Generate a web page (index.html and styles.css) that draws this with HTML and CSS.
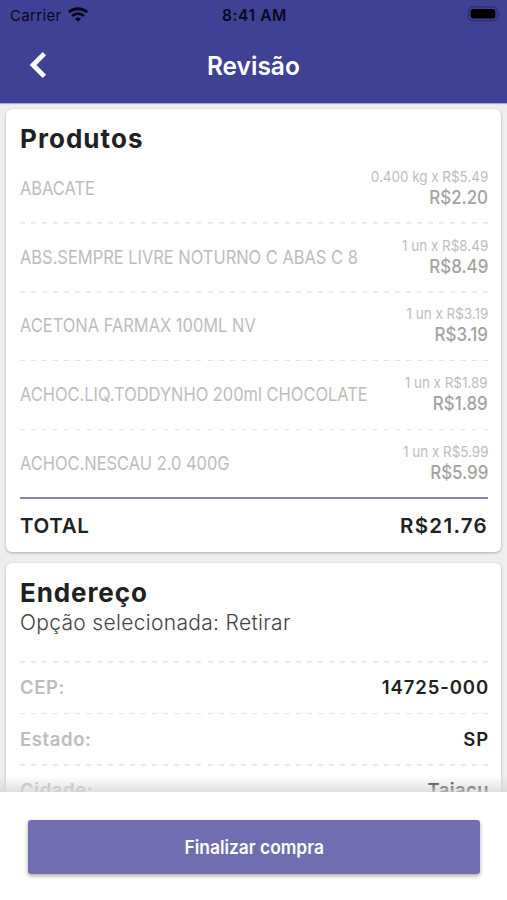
FILE: index.html
```
<!DOCTYPE html>
<html lang="pt-BR">
<head>
<meta charset="utf-8">
<title>Revisão</title>
<link rel="stylesheet" href="styles.css">
</head>
<body>
<div class="screen">
  <header class="header">
    <div class="status">
      <div class="carrier"><span>Carrier</span>
        <svg class="wifi" width="20" height="15" viewBox="0 0 20 15"><path d="M.8 5.2C6 .6 14 .6 19.2 5.2" fill="none" stroke="#08081c" stroke-width="3"/><path d="M4 9c3.5-3.1 8.5-3.1 12 0" fill="none" stroke="#08081c" stroke-width="2.7"/><path d="M6.9 11.6c1.8-1.5 4.4-1.5 6.2 0L10 14.7z" fill="#08081c"/></svg>
      </div>
      <div class="clock">8:41 AM</div>
      <svg class="battery" width="33" height="16" viewBox="0 0 33 16"><rect x=".7" y=".9" width="28.6" height="13.8" rx="4" fill="none" stroke="#2c2e70" stroke-width="1.2"/><rect x="2.7" y="3" width="24.6" height="9.6" rx="2.4" fill="#000"/><path d="M31 5.5c1.6.8 1.6 3.8 0 4.6z" fill="#2c2e70"/></svg>
    </div>
    <div class="nav">
      <svg class="back" width="18" height="28" viewBox="0 0 18 28"><path d="M15.4 2.6 4 14l11.4 11.4" fill="none" stroke="#fff" stroke-width="4.8"/></svg>
      <h1>Revisão</h1>
      <span></span>
    </div>
  </header>
  <main class="content">
    <section class="card products">
      <h2>Produtos</h2>
      <div class="item"><span class="name">ABACATE</span><div class="cost"><small>0.400 kg x R$5.49</small><b>R$2.20</b></div></div>
      <div class="item"><span class="name">ABS.SEMPRE LIVRE NOTURNO C ABAS C 8</span><div class="cost"><small>1 un x R$8.49</small><b>R$8.49</b></div></div>
      <div class="item"><span class="name">ACETONA FARMAX 100ML NV</span><div class="cost"><small>1 un x R$3.19</small><b>R$3.19</b></div></div>
      <div class="item"><span class="name">ACHOC.LIQ.TODDYNHO 200ml CHOCOLATE</span><div class="cost"><small>1 un x R$1.89</small><b>R$1.89</b></div></div>
      <div class="item last"><span class="name">ACHOC.NESCAU 2.0 400G</span><div class="cost"><small>1 un x R$5.99</small><b>R$5.99</b></div></div>
      <div class="total"><span>TOTAL</span><span class="sum">R$21.76</span></div>
    </section>
    <section class="card address">
      <h2>Endereço</h2>
      <p>Opção selecionada: Retirar</p>
      <div class="field"><span class="label">CEP:</span><span class="value">14725-000</span></div>
      <div class="field"><span class="label">Estado:</span><span class="value">SP</span></div>
      <div class="field"><span class="label">Cidade:</span><span class="value city">Taiaçu</span></div>
    </section>
  </main>
  <footer class="footer"><button><span>Finalizar compra</span></button></footer>
</div>
</body>
</html>
```
FILE: styles.css
```
* { box-sizing: border-box; }
body { margin: 0; font-family: Inter, "Liberation Sans", sans-serif; color: #212121; background: #eee; }
h1, h2, p { margin: 0; }
.screen { width: 507px; height: 900px; display: flex; flex-direction: column; overflow: hidden; }

.header { height: 103px; flex: none; background: #3f4294; box-shadow: 0 1px 1px #aaabcc; }
.status { height: 30px; display: grid; grid-template-columns: 1fr auto 1fr; align-items: center; padding: 0 8px 0 10px; color: #08081c; }
.carrier { display: flex; align-items: center; gap: 6px; font-size: 15px; letter-spacing: .35px; }
.wifi { margin-top: -1px; }
.clock { font-size: 15.5px; font-weight: 600; letter-spacing: .6px; }
.battery { justify-self: end; margin: -2px -2px 0 0; }
.nav { height: 70px; display: grid; grid-template-columns: 1fr auto 1fr; align-items: center; padding: 0 28px; }
h1 { color: #fff; font-size: 25.5px; line-height: 32px; font-weight: 600; transform: scaleX(.96); margin-top: 1px; }
.back { margin-left: 1px; }

.content { flex: 1; min-height: 0; overflow: hidden; padding: 6px 6px 0; }
.card { background: #fff; border-radius: 6px; padding: 0 13px 0 14px; margin: 0 0 11px; box-shadow: 0 1px 3px rgba(0, 0, 0, .28); }
.products { height: 442.6px; }
.address { height: 330px; }
h2 { font-size: 26px; line-height: 32px; font-weight: 700; letter-spacing: 1.05px; }
.products h2 { padding-top: 14px; height: 46px; }
.address h2 { padding-top: 14.4px; height: 45px; letter-spacing: .9px; }

.item, .field {
  display: flex; align-items: center; justify-content: space-between;
  background: repeating-linear-gradient(90deg, #e6e6e6 0 5px, transparent 5px 11.03px) 0 100% / 100% 1.6px no-repeat;
}
.item { height: 68.8px; padding-bottom: 1px; }
.item.last { background: none; border-bottom: 2.4px solid #8682bb; padding-bottom: 0; }
.name { font-size: 19px; line-height: 24px; color: #bdbdbd; white-space: nowrap; transform: scaleX(.865); transform-origin: 0 50%; }
.cost { width: 0; display: flex; flex-direction: column; align-items: flex-end; white-space: nowrap; margin-top: -3px; }
.cost small { font-size: 15px; line-height: 20px; color: #bdbdbd; transform: scaleX(.895); transform-origin: 100% 50%; }
.cost b { font-size: 19px; line-height: 21px; font-weight: 500; color: #a3a3a3; transform: scaleX(.89); transform-origin: 100% 50%; }
.total { height: 53px; display: flex; align-items: center; justify-content: space-between; font-size: 20.5px; font-weight: 600; letter-spacing: .65px; }
.sum { letter-spacing: 1.3px; }

.address p { height: 55px; padding-top: 1px; font-size: 21px; line-height: 27px; font-weight: 300; letter-spacing: .32px; color: #424242;
  background: repeating-linear-gradient(90deg, #e6e6e6 0 5px, transparent 5px 11.03px) 0 100% / 100% 1.6px no-repeat; }
.field { height: 51.5px; padding-bottom: 2px; font-size: 18.5px; font-weight: 600; }
.label { color: #bdbdbd; letter-spacing: .6px; }
.value { letter-spacing: .9px; margin-right: -1px; }
.value.city { letter-spacing: .4px; }

.footer { height: 108px; flex: none; position: relative; background: #fff; padding: 28px 27px 0 28px; }
.footer::before { content: ""; position: absolute; left: 0; right: 0; bottom: 100%; height: 16px; background: linear-gradient(rgba(215, 215, 215, 0), rgba(215, 215, 215, .8)); }
button { display: block; width: 100%; height: 54px; border: 0; border-radius: 3px; background: #706eb0; color: #fff; font: 600 18.5px Inter, "Liberation Sans", sans-serif; box-shadow: 0 2px 4px rgba(0, 0, 0, .35); }
button span { display: inline-block; transform: scaleX(.938); }
```
